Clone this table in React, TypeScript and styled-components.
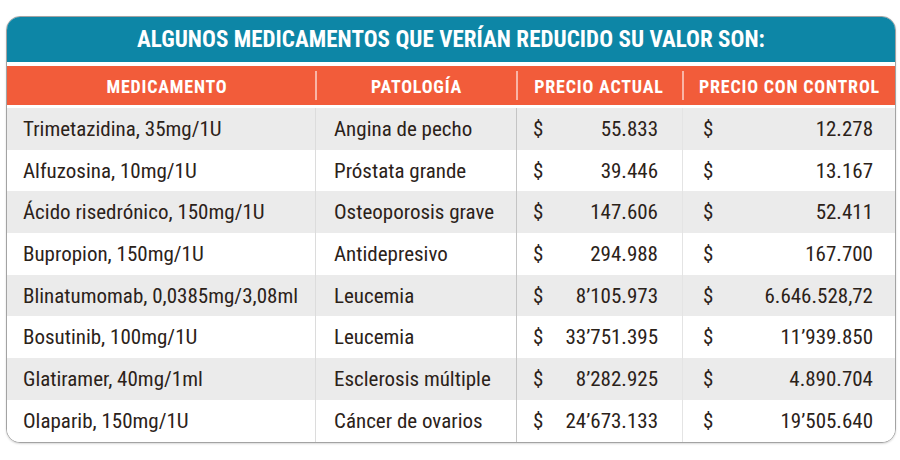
import React from 'react';
import styled, { createGlobalStyle } from 'styled-components';

const ROWS = [
  { med: 'Trimetazidina, 35mg/1U', pat: 'Angina de pecho', actual: '55.833', control: '12.278' },
  { med: 'Alfuzosina, 10mg/1U', pat: 'Próstata grande', actual: '39.446', control: '13.167' },
  { med: 'Ácido risedrónico, 150mg/1U', pat: 'Osteoporosis grave', actual: '147.606', control: '52.411' },
  { med: 'Bupropion, 150mg/1U', pat: 'Antidepresivo', actual: '294.988', control: '167.700' },
  { med: 'Blinatumomab, 0,0385mg/3,08ml', pat: 'Leucemia', actual: '8’105.973', control: '6.646.528,72' },
  { med: 'Bosutinib, 100mg/1U', pat: 'Leucemia', actual: '33’751.395', control: '11’939.850' },
  { med: 'Glatiramer, 40mg/1ml', pat: 'Esclerosis múltiple', actual: '8’282.925', control: '4.890.704' },
  { med: 'Olaparib, 150mg/1U', pat: 'Cáncer de ovarios', actual: '24’673.133', control: '19’505.640' },
];

const COLUMNS = '308px 201px 166px 1fr';

const GlobalStyle = createGlobalStyle`
  html, body {
    margin: 0;
    padding: 0;
    background: #ffffff;
  }
  body {
    font-family: 'Roboto Condensed', 'Liberation Sans Narrow', 'DejaVu Sans Condensed', Roboto, sans-serif;
  }
`;

export default function App() {
  return (
    <>
      <GlobalStyle />
      <Page>
        <Card>
          <TitleBar>ALGUNOS MEDICAMENTOS QUE VERÍAN REDUCIDO SU VALOR SON:</TitleBar>
          <HeaderRow>
            <HeadCell $shift={12}>MEDICAMENTO</HeadCell>
            <HeadCell $divider $shift={2}>PATOLOGÍA</HeadCell>
            <HeadCell $divider>PRECIO ACTUAL</HeadCell>
            <HeadCell $divider $shift={2}>PRECIO CON CONTROL</HeadCell>
          </HeaderRow>
          <Body>
            {ROWS.map((row, idx) => (
              <Row key={row.med} $shaded={idx % 2 === 0}>
                <TextCell $padLeft={16}>{row.med}</TextCell>
                <TextCell $padLeft={18} $line="#dcdcdc">{row.pat}</TextCell>
                <PriceCell $line="#c4c4c4" $padLeft={16} $padRight={24}>
                  <span>$</span>
                  <span>{row.actual}</span>
                </PriceCell>
                <PriceCell $line="#e4e4e4" $padLeft={20} $padRight={22}>
                  <span>$</span>
                  <span>{row.control}</span>
                </PriceCell>
              </Row>
            ))}
          </Body>
        </Card>
      </Page>
    </>
  );
}

const Page = styled.div`
  width: 900px;
  height: 460px;
  padding: 16px 4px 0 6px;
  box-sizing: border-box;
`;

const Card = styled.div`
  border: 1px solid #a3a3a3;
  border-radius: 14px;
  overflow: hidden;
  background: #ffffff;
  box-shadow: 0 1px 2px rgba(0, 0, 0, 0.15);
`;

const TitleBar = styled.div`
  height: 45px;
  background: #0d86a6;
  color: #ffffff;
  font-size: 23px;
  font-weight: 700;
  letter-spacing: 0.05px;
  display: flex;
  align-items: center;
  justify-content: center;
`;

const HeaderRow = styled.div`
  display: grid;
  grid-template-columns: ${COLUMNS};
  height: 39px;
  margin-top: 4px;
  background: #f25c3a;
`;

const HeadCell = styled.div<{ $divider?: boolean; $shift?: number }>`
  position: relative;
  display: flex;
  align-items: center;
  justify-content: center;
  padding-left: ${(p) => p.$shift ?? 0}px;
  padding-top: 1px;
  color: #ffffff;
  font-size: 18px;
  font-weight: 700;
  letter-spacing: 0.8px;

  &::before {
    content: '';
    display: ${(p) => (p.$divider ? 'block' : 'none')};
    position: absolute;
    left: 0;
    top: 5px;
    bottom: 5px;
    width: 2px;
    background: rgba(255, 255, 255, 0.55);
  }
`;

const Body = styled.div`
  margin-top: 3px;
`;

const Row = styled.div<{ $shaded: boolean }>`
  display: grid;
  grid-template-columns: ${COLUMNS};
  height: 41.7px;
  background: ${(p) => (p.$shaded ? '#ebebeb' : '#ffffff')};
  color: #2b2219;
  font-size: 21px;
`;

const TextCell = styled.div<{ $padLeft: number; $line?: string }>`
  display: flex;
  align-items: center;
  padding-left: ${(p) => p.$padLeft}px;
  border-left: ${(p) => (p.$line ? `1px solid ${p.$line}` : 'none')};
  white-space: nowrap;
`;

const PriceCell = styled.div<{ $line: string; $padLeft: number; $padRight: number }>`
  display: flex;
  align-items: center;
  justify-content: space-between;
  padding: 0 ${(p) => p.$padRight}px 0 ${(p) => p.$padLeft}px;
  border-left: 1px solid ${(p) => p.$line};
  white-space: nowrap;
`;
